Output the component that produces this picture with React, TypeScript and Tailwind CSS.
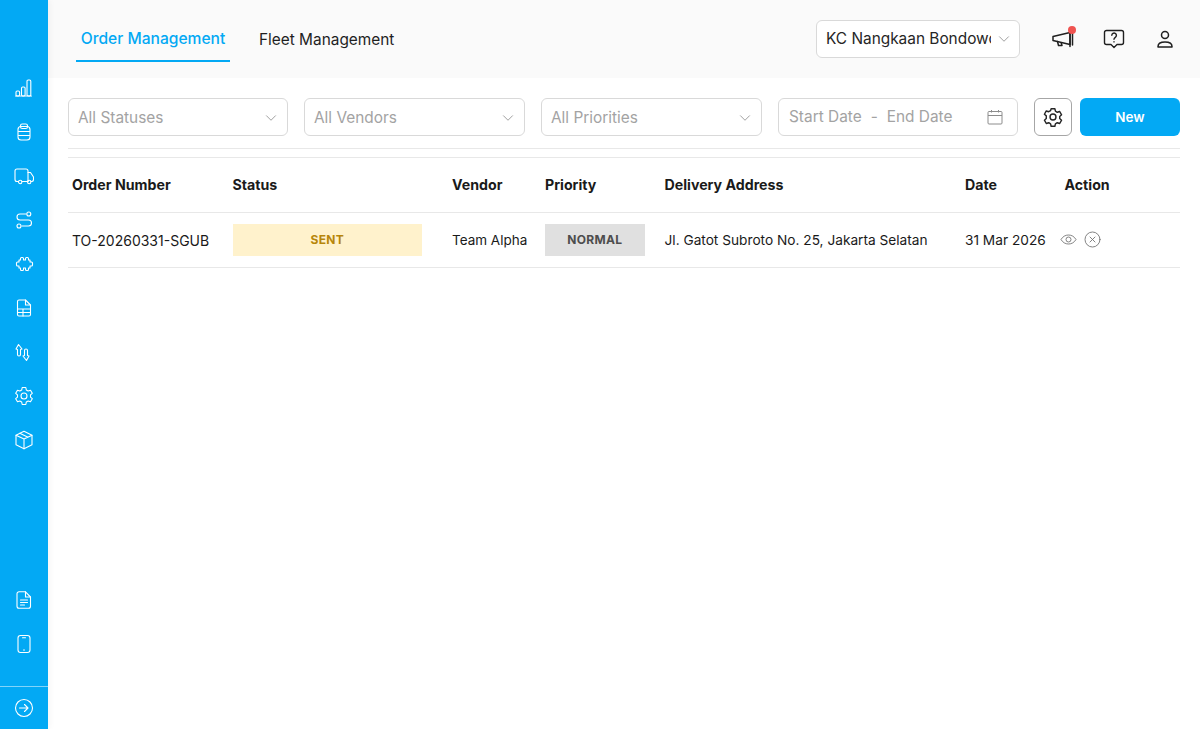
import { ChevronDown } from "lucide-react";
import type { ReactNode } from "react";

const FONT = { fontFamily: "Inter, 'Liberation Sans', sans-serif" };

function Icon({ children, size = 20 }: { children: ReactNode; size?: number }) {
  return (
    <svg width={size} height={size} viewBox="0 0 20 20" fill="none" stroke="currentColor" strokeWidth="1.100" strokeLinecap="round" strokeLinejoin="round">
      {children}
    </svg>
  );
}

const TOP_ICONS: ReactNode[] = [
  <>
    <path d="M1.500 18h16" />
    <rect x="2" y="13" width="3.600" height="5" rx="1.200" />
    <rect x="7.500" y="9" width="3.600" height="9" rx="1.200" />
    <rect x="13" y="2" width="3.800" height="16" rx="1.200" />
  </>,
  <>
    <rect x="4" y="4.500" width="12" height="13.500" rx="3" />
    <rect x="6.500" y="2" width="7" height="4.500" rx="1.800" />
    <path d="M4.500 9.500h11M4.500 13.500h11" />
  </>,
  <>
    <path d="M4.500 15.500H3A2 2 0 0 1 1 13.500V5a2 2 0 0 1 2-2h9a2 2 0 0 1 2 2v10.500H8" />
    <path d="M14 6.500h2.500l3 4.500v2.500a2 2 0 0 1-2 2h-.5M14 15.500h-.5" />
    <circle cx="6.200" cy="16" r="1.700" />
    <circle cx="15.200" cy="16" r="1.700" />
  </>,
  <>
    <circle cx="14.800" cy="4" r="2" />
    <circle cx="5" cy="16" r="2" />
    <path d="M12 4H6a3 3 0 0 0 0 6h8.500a3 3 0 0 1 0 6H8" />
  </>,
  <path d="M5 6h1.500V4.500a1 1 0 0 1 1-1h1a1 1 0 0 1 1 1V6h2V4.500a1 1 0 0 1 1-1h1a1 1 0 0 1 1 1V6H16v2h1.500a1 1 0 0 1 1 1v2a1 1 0 0 1-1 1H16v2h-1.500v1.500a1 1 0 0 1-1 1h-1a1 1 0 0 1-1-1V14h-2v1.500a1 1 0 0 1-1 1h-1a1 1 0 0 1-1-1V14H5v-2H3.500a1 1 0 0 1-1-1V9a1 1 0 0 1 1-1H5z" />,
  <>
    <path d="M5 2h6.500L16.500 7v9.500a1.500 1.500 0 0 1-1.500 1.500H5a1.500 1.500 0 0 1-1.500-1.500v-13A1.500 1.500 0 0 1 5 2z" />
    <path d="M11.500 2V7h5" />
    <path d="M3.500 11h13M3.500 14.500h13M9 11v7" />
  </>,
  <>
    <path d="M4.500 2.500L8 7l-1.500.5v5a1.500 1.500 0 0 1-3 0v-5L2 7z" />
    <path d="M12.500 18.500L9 14l1.500-.5v-5a1.500 1.500 0 0 1 3 0v5l1.500.5z" />
  </>,
  <>
    <circle cx="10" cy="10" r="3" />
    <path d="M8.200 1.500h3.600l.5 2.400 1.900 1.100 2.300-.8 1.800 3.100-1.800 1.600v2.200l1.800 1.600-1.800 3.100-2.300-.8-1.900 1.100-.5 2.400H8.200l-.5-2.400-1.900-1.100-2.300.8-1.800-3.100 1.800-1.600V8.900L1.700 7.300l1.800-3.100 2.300.8 1.900-1.100z" />
  </>,
  <>
    <path d="M10 1.300l8 3.900v9.600l-8 3.900-8-3.900V5.200z" />
    <path d="M2 5.200L10 9l8-3.800M10 9v9.700M5.800 3.300l8.200 3.900" />
  </>,
];

const BOTTOM_ICONS: ReactNode[] = [
  <>
    <path d="M5 1.800h6.500L16.500 7v9.300a2 2 0 0 1-2 2H5a2 2 0 0 1-2-2V3.800a2 2 0 0 1 2-2z" />
    <path d="M11.500 1.800V7h5M6.500 10h7M6.500 12.500h7M6.500 15h4" />
  </>,
  <>
    <rect x="4" y="1.500" width="12" height="17" rx="2.500" />
    <path d="M8.500 3.700h3M9.500 16h1" />
  </>,
];

function Sidebar() {
  return (
    <aside className="z-10 flex h-full w-12 shrink-0 flex-col bg-[#03a9f4] text-white shadow-[2px_0_6px_rgba(0,0,0,0.04)]">
      <nav className="flex flex-1 flex-col pt-[66px]">
        {TOP_ICONS.map((icon, i) => (
          <div key={i} className="flex h-11 items-center justify-center">
            <Icon>{icon}</Icon>
          </div>
        ))}
        <div className="flex-1" />
        {BOTTOM_ICONS.map((icon, i) => (
          <div key={i} className="flex h-11 items-center justify-center">
            <Icon>{icon}</Icon>
          </div>
        ))}
      </nav>
      <div className="mt-5 flex h-[43px] items-center justify-center border-t border-white/50">
        <Icon>
          <circle cx="10" cy="10" r="8.500" />
          <path d="M5.500 10h8.500M10.500 6.500L14 10l-3.500 3.500" />
        </Icon>
      </div>
    </aside>
  );
}

function Header() {
  return (
    <header className="flex h-[78px] shrink-0 items-center justify-between bg-[#fafafa] pl-7 pr-[23px]">
      <div className="flex h-full items-start pt-4 text-[15.400px]">
        <div className="flex h-[46px] w-[154px] items-center justify-center border-b-2 border-[#03a9f4] pt-[1px] text-[15.600px] font-medium text-[#03a9f4]">
          Order Management
        </div>
        <div className="ml-[29px] flex h-[46px] items-center pt-[1px] text-[#1f1f1f]">
          Fleet Management
        </div>
      </div>
      <div className="flex items-center">
        <div className="flex h-[38px] w-[204px] items-center rounded-md border border-[#d9d9d9] bg-white pl-[9px] pr-[6px] text-[15.400px] text-[#262626]">
          <span className="w-[165px] overflow-hidden whitespace-nowrap">KC Nangkaan Bondowoso</span>
          <ChevronDown size={18} strokeWidth={1.100} className="ml-auto text-[#8c8c8c]" />
        </div>
        <div className="relative ml-[31px] text-[#1f1f1f]">
          <svg width="24" height="24" viewBox="0 0 24 24" fill="none" stroke="currentColor" strokeWidth="1.500" strokeLinecap="round" strokeLinejoin="round" className="block">
            <path d="M2 9.500L19 5.500v12L2 13.500z" />
            <path d="M19 4.500v15M21.500 6.500v11.500M6.500 14.500l1 4h3.500l-.8-2.800" />
          </svg>
          <span className="absolute -right-[1px] -top-[1px] h-2 w-2 rounded-full bg-[#ef5350]" />
        </div>
        <div className="ml-[27px] text-[#1f1f1f]">
          <svg width="24" height="24" viewBox="0 0 24 24" fill="none" stroke="currentColor" strokeWidth="1.400" strokeLinecap="round" strokeLinejoin="round" className="block">
            <path d="M4.500 3.500h15a2 2 0 0 1 2 2v10a2 2 0 0 1-2 2h-4.500L12 20.500 9 17.500H4.500a2 2 0 0 1-2-2v-10a2 2 0 0 1 2-2z" />
            <path d="M9.800 8.300a2.300 2.300 0 1 1 3.500 2c-.9.600-1.300 1-1.300 2M12 14.800v.1" />
          </svg>
        </div>
        <div className="ml-[27px] text-[#1f1f1f]">
          <svg width="24" height="24" viewBox="0 0 24 24" fill="none" stroke="currentColor" strokeWidth="1.500" strokeLinecap="round" strokeLinejoin="round" className="block">
            <circle cx="12" cy="8" r="3.500" />
            <path d="M5 19.500c0-3 3-4.500 7-4.500s7 1.500 7 4.500v.5H5z" />
          </svg>
        </div>
      </div>
    </header>
  );
}

function FilterSelect({ label, width }: { label: string; width: string }) {
  return (
    <div className={`flex h-[38px] items-center justify-between rounded-md border border-[#d9d9d9] pl-[9px] pr-[7px] pt-[1px] text-[15.400px] text-[#a3a3a3] ${width}`}>
      <span>{label}</span>
      <ChevronDown size={18} strokeWidth={1.100} className="text-[#8c8c8c]" />
    </div>
  );
}

function Filters() {
  return (
    <div className="flex items-center pt-5">
      <FilterSelect label="All Statuses" width="w-[220px]" />
      <div className="w-4" />
      <FilterSelect label="All Vendors" width="w-[221px]" />
      <div className="w-4" />
      <FilterSelect label="All Priorities" width="w-[221px]" />
      <div className="w-4" />
      <div className="flex h-[38px] w-[240px] items-center rounded-md border border-[#d9d9d9] pl-[10px] pr-[14px] text-[15.400px] text-[#a3a3a3]">
        <span>Start Date</span>
        <span className="mx-[9px]">-</span>
        <span>End Date</span>
        <svg width="16" height="16" viewBox="0 0 16 16" fill="none" stroke="#8c8c8c" strokeWidth="1" className="ml-auto">
          <rect x="1" y="2.500" width="14" height="12.500" rx="1" />
          <path d="M1 6.500h14M4.500 1v2.500M11.500 1v2.500" />
        </svg>
      </div>
      <div className="ml-4 flex h-[38px] w-[38px] items-center justify-center rounded-md border border-[#a6a6a6] text-[#262626]">
        <svg width="22" height="22" viewBox="0 0 20 20" fill="none" stroke="currentColor" strokeWidth="1.300" strokeLinejoin="round">
          <circle cx="10" cy="10" r="2.700" />
          <path d="M8.300 2.500h3.400l.5 2.200 1.700 1 2.200-.7 1.700 3-1.700 1.500v1.900l1.700 1.500-1.700 3-2.200-.7-1.700 1-.5 2.200H8.300l-.5-2.200-1.700-1-2.200.7-1.700-3 1.700-1.500V9l-1.700-1.500 1.700-3 2.200.7 1.700-1z" />
        </svg>
      </div>
      <button className="ml-2 h-[38px] w-[100px] rounded-md bg-[#03a9f4] text-[13.500px] font-semibold text-white">New</button>
    </div>
  );
}

const COLS = "grid grid-cols-[160.500px_219.500px_93px_119.500px_300.500px_99.500px_119.500px]";

function OrderTable() {
  return (
    <div className="mt-2 border-t border-[#e8e8e8] text-[13.700px] text-[#1a1a1a]">
      <div className={`${COLS} h-[55px] items-center border-b border-[#e8e8e8] pl-1 text-[14.200px] font-bold`}>
        <div>Order Number</div>
        <div>Status</div>
        <div>Vendor</div>
        <div>Priority</div>
        <div>Delivery Address</div>
        <div>Date</div>
        <div>Action</div>
      </div>
      <div className={`${COLS} h-[55px] items-center border-b border-[#e8e8e8] pl-1`}>
        <div className="text-[14px]">TO-20260331-SGUB</div>
        <div className="pr-[30px]">
          <div className="flex h-8 items-center justify-center bg-[#fff2cc] text-[12px] font-bold tracking-[0.300px] text-[#b7860b]">SENT</div>
        </div>
        <div className="text-[13.500px]">Team Alpha</div>
        <div className="pr-5">
          <div className="flex h-8 items-center justify-center bg-[#e0e0e0] text-[12px] font-bold tracking-[0.300px] text-[#4d4d4d]">NORMAL</div>
        </div>
        <div className="whitespace-nowrap">Jl. Gatot Subroto No. 25, Jakarta Selatan</div>
        <div>31 Mar 2026</div>
        <div className="-ml-[5px] -mt-[2px] flex items-center gap-[7px] text-[#757575]">
          <svg width="17" height="17" viewBox="0 0 17 17" fill="none" stroke="currentColor" strokeWidth="0.900">
            <path d="M1 8.500C2.800 5.500 5.400 4 8.500 4s5.700 1.500 7.500 4.500C14.200 11.500 11.600 13 8.500 13S2.800 11.500 1 8.500z" />
            <circle cx="8.500" cy="8.500" r="2.500" />
          </svg>
          <svg width="17" height="17" viewBox="0 0 17 17" fill="none" stroke="currentColor" strokeWidth="0.900" strokeLinecap="round">
            <circle cx="8.500" cy="8.500" r="7.500" />
            <path d="M6 6l5 5M11 6l-5 5" />
          </svg>
        </div>
      </div>
    </div>
  );
}

export default function App() {
  return (
    <div className="flex h-[729px] w-[1200px] overflow-hidden bg-white" style={FONT}>
      <Sidebar />
      <div className="flex min-w-0 flex-1 flex-col">
        <Header />
        <main className="flex-1 px-5">
          <Filters />
          <div className="mt-3 border-t border-[#e8e8e8]" />
          <OrderTable />
        </main>
      </div>
    </div>
  );
}
